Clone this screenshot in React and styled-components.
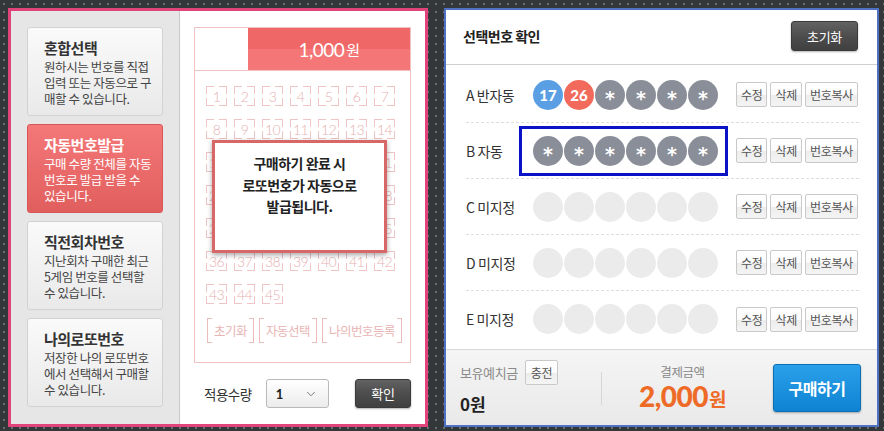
import styled, { createGlobalStyle, css } from "styled-components";
import { ChevronDown } from "lucide-react";

const KR = `"Noto Sans CJK KR", "Noto Sans", sans-serif`;
const LATIN = `Lato, "Noto Sans CJK KR", sans-serif`;
const PINK = "#f0c2c2";

const GlobalStyle = createGlobalStyle`
  html, body {
    margin: 0;
    height: 431px;
    overflow: hidden;
  }
  body {
    background-color: #34373a;
    background-image: radial-gradient(circle, #6a6d70 0.9px, transparent 1.4px);
    background-size: 8px 8px;
    font-family: ${KR};
    color: #333;
  }
`;

const Page = styled.div`
  display: flex;
  gap: 16px;
  padding: 8px 0 0 8px;
`;

const LeftPanel = styled.section`
  width: 420px;
  height: 419px;
  box-sizing: border-box;
  border: 3px solid #e1447b;
  display: flex;
  background: #fff;
`;

const Sidebar = styled.div`
  width: 169px;
  flex-shrink: 0;
  box-sizing: border-box;
  background: #e6e6e6;
  border-right: 1px solid #c9c9c9;
  padding: 16px 16px 0 16px;
  display: flex;
  flex-direction: column;
  gap: 8px;
`;

const ModeCard = styled.div`
  height: 89px;
  box-sizing: border-box;
  border-radius: 3px;
  padding: 10px 8px 0 16px;
  ${({ $active }) =>
    $active
      ? css`
          background: linear-gradient(#f47878, #e15e5e);
          border: 1px solid #d85656;
          color: #fff;
        `
      : css`
          background: linear-gradient(#fafafa, #e9e9e9);
          border: 1px solid #d2d2d2;
          color: #333;
        `}
`;

const CardTitle = styled.div`
  font-size: 15px;
  font-weight: 700;
  line-height: 20px;
  letter-spacing: -0.5px;
`;

const CardText = styled.div`
  margin-top: 1px;
  font-size: 12.5px;
  line-height: 16px;
  letter-spacing: -0.4px;
  color: ${({ $active }) => ($active ? "#fff" : "#444")};
`;

const Main = styled.div`
  flex: 1;
  padding: 16px 14px 0 14px;
  display: flex;
  flex-direction: column;
`;

const Ticket = styled.div`
  position: relative;
  height: 336px;
  box-sizing: border-box;
  border: 1px solid ${PINK};
`;

const TicketHead = styled.div`
  height: 42px;
  display: flex;
  border-bottom: 1px solid ${PINK};
`;

const Price = styled.div`
  margin-left: 53px;
  flex: 1;
  display: flex;
  align-items: center;
  justify-content: center;
  background: linear-gradient(#f06767 50%, #f47676 50%);
  color: #fff;
  font-family: ${LATIN};
  font-size: 19px;
  letter-spacing: -0.5px;
  small {
    font-family: ${KR};
    font-size: 15px;
    margin-left: 2px;
  }
`;

const corners = (c, a) => css`
  background:
    linear-gradient(${c}, ${c}) left top / ${a} 1px no-repeat,
    linear-gradient(${c}, ${c}) left top / 1px ${a} no-repeat,
    linear-gradient(${c}, ${c}) right top / ${a} 1px no-repeat,
    linear-gradient(${c}, ${c}) right top / 1px ${a} no-repeat,
    linear-gradient(${c}, ${c}) left bottom / ${a} 1px no-repeat,
    linear-gradient(${c}, ${c}) left bottom / 1px ${a} no-repeat,
    linear-gradient(${c}, ${c}) right bottom / ${a} 1px no-repeat,
    linear-gradient(${c}, ${c}) right bottom / 1px ${a} no-repeat;
`;

const NumGrid = styled.div`
  display: grid;
  grid-template-columns: repeat(7, 21px);
  grid-auto-rows: 20px;
  column-gap: 7px;
  row-gap: 13px;
  padding: 15px 0 0 11px;
`;

const NumBox = styled.div`
  ${corners("#eec4c4", "8px")}
  display: flex;
  align-items: flex-end;
  justify-content: center;
  font-family: ${LATIN};
  font-weight: 300;
  font-size: 14px;
  line-height: 18px;
  color: #e6b0b0;
  letter-spacing: -0.6px;
`;

const ToolRow = styled.div`
  display: flex;
  gap: 5px;
  margin: 14px 0 0 12px;
`;

const ToolBtn = styled.div`
  height: 25px;
  padding: 0 6px;
  display: flex;
  align-items: center;
  border-left: 1px solid #ebbcbc;
  border-right: 1px solid #ebbcbc;
  background:
    linear-gradient(#ebbcbc, #ebbcbc) left top / 4px 1px no-repeat,
    linear-gradient(#ebbcbc, #ebbcbc) right top / 4px 1px no-repeat,
    linear-gradient(#ebbcbc, #ebbcbc) left bottom / 4px 1px no-repeat,
    linear-gradient(#ebbcbc, #ebbcbc) right bottom / 4px 1px no-repeat;
  font-size: 12.5px;
  color: #e9b4b4;
  letter-spacing: -0.5px;
`;

const Notice = styled.div`
  position: absolute;
  left: 17px;
  top: 112px;
  width: 175px;
  height: 113px;
  box-sizing: border-box;
  padding-top: 10px;
  background: #fff;
  border: 3px solid #d86868;
  box-shadow: 0 2px 5px rgba(0, 0, 0, 0.35);
  text-align: center;
  font-size: 14px;
  font-weight: 700;
  line-height: 21.5px;
  letter-spacing: -0.5px;
  color: #222;
`;

const QtyRow = styled.div`
  display: flex;
  align-items: center;
  margin-top: 16px;
  height: 29px;
`;

const QtyLabel = styled.span`
  margin-left: 10px;
  font-size: 13.5px;
  color: #333;
  letter-spacing: -0.5px;
`;

const Select = styled.div`
  margin-left: 14px;
  width: 63px;
  height: 29px;
  box-sizing: border-box;
  border: 1px solid #b9b9b9;
  border-radius: 3px;
  background: linear-gradient(#fff, #ececec);
  display: flex;
  align-items: center;
  justify-content: space-between;
  padding: 0 10px 0 9px;
  font-family: ${LATIN};
  font-weight: 700;
  font-size: 13px;
  color: #222;
`;

const DarkBtn = styled.button`
  margin-left: ${({ $push }) => ($push ? "auto" : "0")};
  width: ${({ $w }) => $w}px;
  height: ${({ $h }) => $h}px;
  border: 1px solid #3a3a3a;
  border-radius: 3px;
  background: linear-gradient(#626262 0%, #4d4d4d 50%, #404040 100%);
  box-shadow: 0 1px 2px rgba(0, 0, 0, 0.3);
  color: #fff;
  font-family: ${KR};
  font-size: 13px;
  letter-spacing: -0.3px;
  padding: 0;
`;

const RightPanel = styled.section`
  width: 435px;
  height: 419px;
  box-sizing: border-box;
  border: 2px solid #4f71c4;
  background: #fff;
  display: flex;
  flex-direction: column;
`;

const RightHead = styled.div`
  height: 55px;
  box-sizing: border-box;
  border-bottom: 1px solid #cfcfcf;
  display: flex;
  align-items: center;
  justify-content: space-between;
  padding: 0 19px 2px 17px;
`;

const HeadTitle = styled.h2`
  margin: 0;
  font-size: 14px;
  font-weight: 700;
  letter-spacing: -0.5px;
  color: #222;
`;

const Rows = styled.div`
  padding: 2px 18px 0 20px;
  flex: 1;
`;

const Row = styled.div`
  height: 56px;
  box-sizing: border-box;
  display: flex;
  align-items: center;
  border-bottom: 1px dashed #dedede;
  &:last-child {
    border-bottom: none;
  }
`;

const RowLabel = styled.span`
  width: 67px;
  font-size: 14px;
  color: #333;
  letter-spacing: -0.4px;
`;

const Balls = styled.div`
  position: relative;
  display: flex;
  gap: 1px;
`;

const Highlight = styled.div`
  position: absolute;
  left: -14px;
  top: -10px;
  width: 209px;
  height: 50px;
  box-sizing: border-box;
  border: 3px solid #0a14c6;
`;

const ballColors = {
  blue: "#5a9fe3",
  red: "#f26a5c",
  star: "#8a8e98",
  empty: "#ebebeb",
};

const Ball = styled.div`
  width: 30px;
  height: 30px;
  border-radius: 50%;
  background: ${({ $kind }) => ballColors[$kind]};
  color: #fff;
  display: flex;
  align-items: center;
  justify-content: center;
  font-family: ${({ $kind }) => ($kind === "star" ? `"DejaVu Sans", sans-serif` : LATIN)};
  font-weight: ${({ $kind }) => ($kind === "star" ? 700 : 900)};
  font-size: ${({ $kind }) => ($kind === "star" ? "19px" : "15px")};
  padding-top: ${({ $kind }) => ($kind === "star" ? "7px" : "0")};
  box-sizing: border-box;
`;

const Actions = styled.div`
  margin-left: 18px;
  display: flex;
  gap: 3px;
`;

const SmallBtn = styled.button`
  height: 25px;
  padding: 0 ${({ $pad }) => $pad || 4}px;
  border: 1px solid #c9c9c9;
  border-radius: 2px;
  background: linear-gradient(#ffffff 0%, #fbfbfb 50%, #ececec 51%, #f4f4f4 100%);
  font-family: ${KR};
  font-size: 12px;
  color: #555;
  letter-spacing: -0.3px;
`;

const Footer = styled.div`
  height: 76px;
  box-sizing: border-box;
  border-top: 1px solid #d8d8d8;
  background: linear-gradient(#f5f5f5, #e9e9e9);
  display: flex;
  align-items: center;
  padding: 0 16px 0 14px;
`;

const Balance = styled.div`
  width: 141px;
  display: flex;
  flex-direction: column;
  gap: 6px;
`;

const BalanceTop = styled.div`
  display: flex;
  align-items: center;
  gap: 7px;
  font-size: 13px;
  color: #8a8a8a;
  letter-spacing: -0.4px;
`;

const BalanceValue = styled.div`
  font-size: 17px;
  font-weight: 700;
  color: #222;
`;

const Divider = styled.div`
  width: 1px;
  height: 33px;
  background: #d6d6d6;
  margin-top: 2px;
`;

const Pay = styled.div`
  flex: 1;
  display: flex;
  flex-direction: column;
  align-items: center;
  margin-right: 10px;
`;

const PayLabel = styled.div`
  font-size: 12.5px;
  color: #888;
  letter-spacing: -0.4px;
`;

const PayValue = styled.div`
  font-family: ${LATIN};
  font-size: 28px;
  font-weight: 900;
  line-height: 30px;
  color: #ee6b27;
  letter-spacing: -0.5px;
  small {
    font-family: ${KR};
    font-size: 19px;
    font-weight: 700;
    margin-left: 1px;
  }
`;

const BuyBtn = styled.button`
  width: 88px;
  height: 48px;
  border: 1px solid #0b6fb4;
  border-radius: 3px;
  background: linear-gradient(#2aa0ea, #0f83d2);
  box-shadow: 0 1px 2px rgba(0, 0, 0, 0.3);
  color: #fff;
  font-family: ${KR};
  font-size: 16px;
  font-weight: 700;
  letter-spacing: -0.5px;
  padding: 0;
`;

const modes = [
  { title: "혼합선택", text: ["원하시는 번호를 직접", "입력 또는 자동으로 구", "매할 수 있습니다."] },
  { title: "자동번호발급", text: ["구매 수량 전체를 자동", "번호로 발급 받을 수", "있습니다."], active: true },
  { title: "직전회차번호", text: ["지난회차 구매한 최근", "5게임 번호를 선택할", "수 있습니다."] },
  { title: "나의로또번호", text: ["저장한 나의 로또번호", "에서 선택해서 구매할", "수 있습니다."] },
];

const lines = [
  { label: "A 반자동", balls: [["blue", "17"], ["red", "26"], ["star", "*"], ["star", "*"], ["star", "*"], ["star", "*"]] },
  { label: "B 자동", balls: Array(6).fill(["star", "*"]), highlight: true },
  { label: "C 미지정", balls: Array(6).fill(["empty", ""]) },
  { label: "D 미지정", balls: Array(6).fill(["empty", ""]) },
  { label: "E 미지정", balls: Array(6).fill(["empty", ""]) },
];

export default function App() {
  const numbers = Array.from({ length: 45 }, (_, i) => i + 1);
  return (
    <>
      <GlobalStyle />
      <Page>
        <LeftPanel>
          <Sidebar>
            {modes.map((m) => (
              <ModeCard key={m.title} $active={m.active}>
                <CardTitle>{m.title}</CardTitle>
                <CardText $active={m.active}>
                  {m.text.map((t) => (
                    <div key={t}>{t}</div>
                  ))}
                </CardText>
              </ModeCard>
            ))}
          </Sidebar>
          <Main>
            <Ticket>
              <TicketHead>
                <Price>
                  1,000<small>원</small>
                </Price>
              </TicketHead>
              <NumGrid>
                {numbers.map((n) => (
                  <NumBox key={n}>{n}</NumBox>
                ))}
              </NumGrid>
              <ToolRow>
                <ToolBtn>초기화</ToolBtn>
                <ToolBtn>자동선택</ToolBtn>
                <ToolBtn>나의번호등록</ToolBtn>
              </ToolRow>
              <Notice>
                구매하기 완료 시<br />
                로또번호가 자동으로<br />
                발급됩니다.
              </Notice>
            </Ticket>
            <QtyRow>
              <QtyLabel>적용수량</QtyLabel>
              <Select>
                1 <ChevronDown size={14} color="#666" strokeWidth={1.5} />
              </Select>
              <DarkBtn $push $w={56} $h={29}>
                확인
              </DarkBtn>
            </QtyRow>
          </Main>
        </LeftPanel>

        <RightPanel>
          <RightHead>
            <HeadTitle>선택번호 확인</HeadTitle>
            <DarkBtn $w={67} $h={30}>
              초기화
            </DarkBtn>
          </RightHead>
          <Rows>
            {lines.map((l) => (
              <Row key={l.label}>
                <RowLabel>{l.label}</RowLabel>
                <Balls>
                  {l.balls.map(([kind, v], i) => (
                    <Ball key={i} $kind={kind}>
                      {v}
                    </Ball>
                  ))}
                  {l.highlight && <Highlight />}
                </Balls>
                <Actions>
                  <SmallBtn>수정</SmallBtn>
                  <SmallBtn>삭제</SmallBtn>
                  <SmallBtn>번호복사</SmallBtn>
                </Actions>
              </Row>
            ))}
          </Rows>
          <Footer>
            <Balance>
              <BalanceTop>
                보유예치금 <SmallBtn $pad={5}>충전</SmallBtn>
              </BalanceTop>
              <BalanceValue>0원</BalanceValue>
            </Balance>
            <Divider />
            <Pay>
              <PayLabel>결제금액</PayLabel>
              <PayValue>
                2,000<small>원</small>
              </PayValue>
            </Pay>
            <BuyBtn>구매하기</BuyBtn>
          </Footer>
        </RightPanel>
      </Page>
    </>
  );
}
